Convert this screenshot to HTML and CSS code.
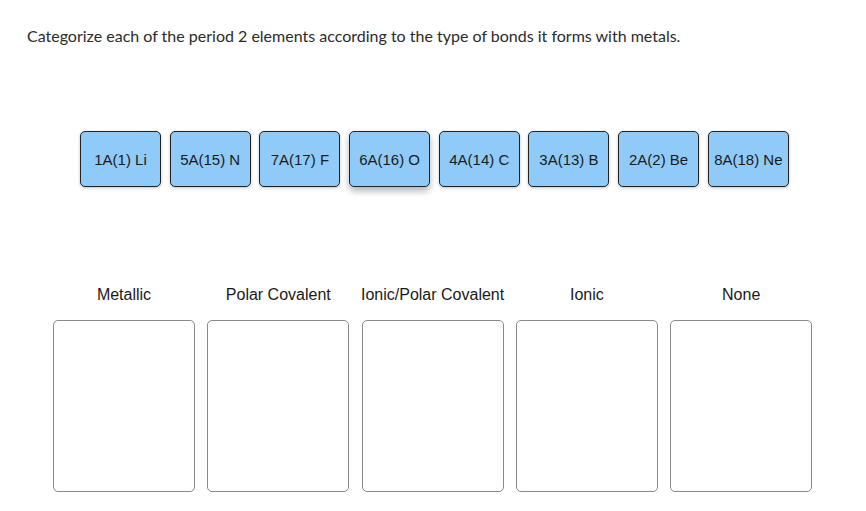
FILE: index.html
```html
<!DOCTYPE html>
<html>
<head>
<meta charset="utf-8">
<link rel="stylesheet" href="styles.css">
</head>
<body>
<p class="prompt">Categorize each of the period 2 elements according to the type of bonds it forms with metals.</p>
<div class="tiles">
  <div class="tile">1A(1) Li</div>
  <div class="tile">5A(15) N</div>
  <div class="tile">7A(17) F</div>
  <div class="tile raised">6A(16) O</div>
  <div class="tile">4A(14) C</div>
  <div class="tile">3A(13) B</div>
  <div class="tile">2A(2) Be</div>
  <div class="tile">8A(18) Ne</div>
</div>
<div class="bins">
  <div class="bin"><div class="label">Metallic</div><div class="drop"></div></div>
  <div class="bin"><div class="label">Polar Covalent</div><div class="drop"></div></div>
  <div class="bin"><div class="label">Ionic/Polar Covalent</div><div class="drop"></div></div>
  <div class="bin"><div class="label">Ionic</div><div class="drop"></div></div>
  <div class="bin"><div class="label">None</div><div class="drop"></div></div>
</div>
</body>
</html>
```
FILE: styles.css
```css
html, body {
  margin: 0;
  padding: 0;
  background: #fff;
}
body {
  width: 866px;
  height: 511px;
  overflow: hidden;
}
.prompt {
  margin: 0;
  padding: 26px 0 0 27px;
  font-family: Lato, "Liberation Sans", sans-serif;
  font-size: 16px;
  line-height: 19px;
  color: #2b2b2b;
}
.tiles {
  display: flex;
  gap: 8.7px;
  padding-left: 80px;
  margin-top: 86px;
}
.tile {
  box-sizing: border-box;
  width: 81px;
  height: 56px;
  background: #90caf9;
  border: 1px solid #222;
  border-radius: 5px;
  box-shadow: 0 1px 3px rgba(0,0,0,0.25);
  display: flex;
  align-items: center;
  justify-content: center;
  font-family: "Liberation Sans", Arial, sans-serif;
  font-size: 15px;
  color: #1a1a1a;
  white-space: nowrap;
}
.tile.raised {
  box-shadow: 0 4px 7px rgba(0,0,0,0.3);
}
.bins {
  display: flex;
  gap: 12.3px;
  padding-left: 53px;
  margin-top: 99px;
}
.bin {
  width: 142px;
  display: flex;
  flex-direction: column;
  align-items: center;
}
.label {
  font-family: "Liberation Sans", Arial, sans-serif;
  font-size: 16px;
  line-height: 18px;
  color: #1a1a1a;
  white-space: nowrap;
  height: 18px;
}
.drop {
  box-sizing: border-box;
  margin-top: 16px;
  width: 142px;
  height: 172px;
  border: 1px solid #8a8a8a;
  border-radius: 5px;
}
```
